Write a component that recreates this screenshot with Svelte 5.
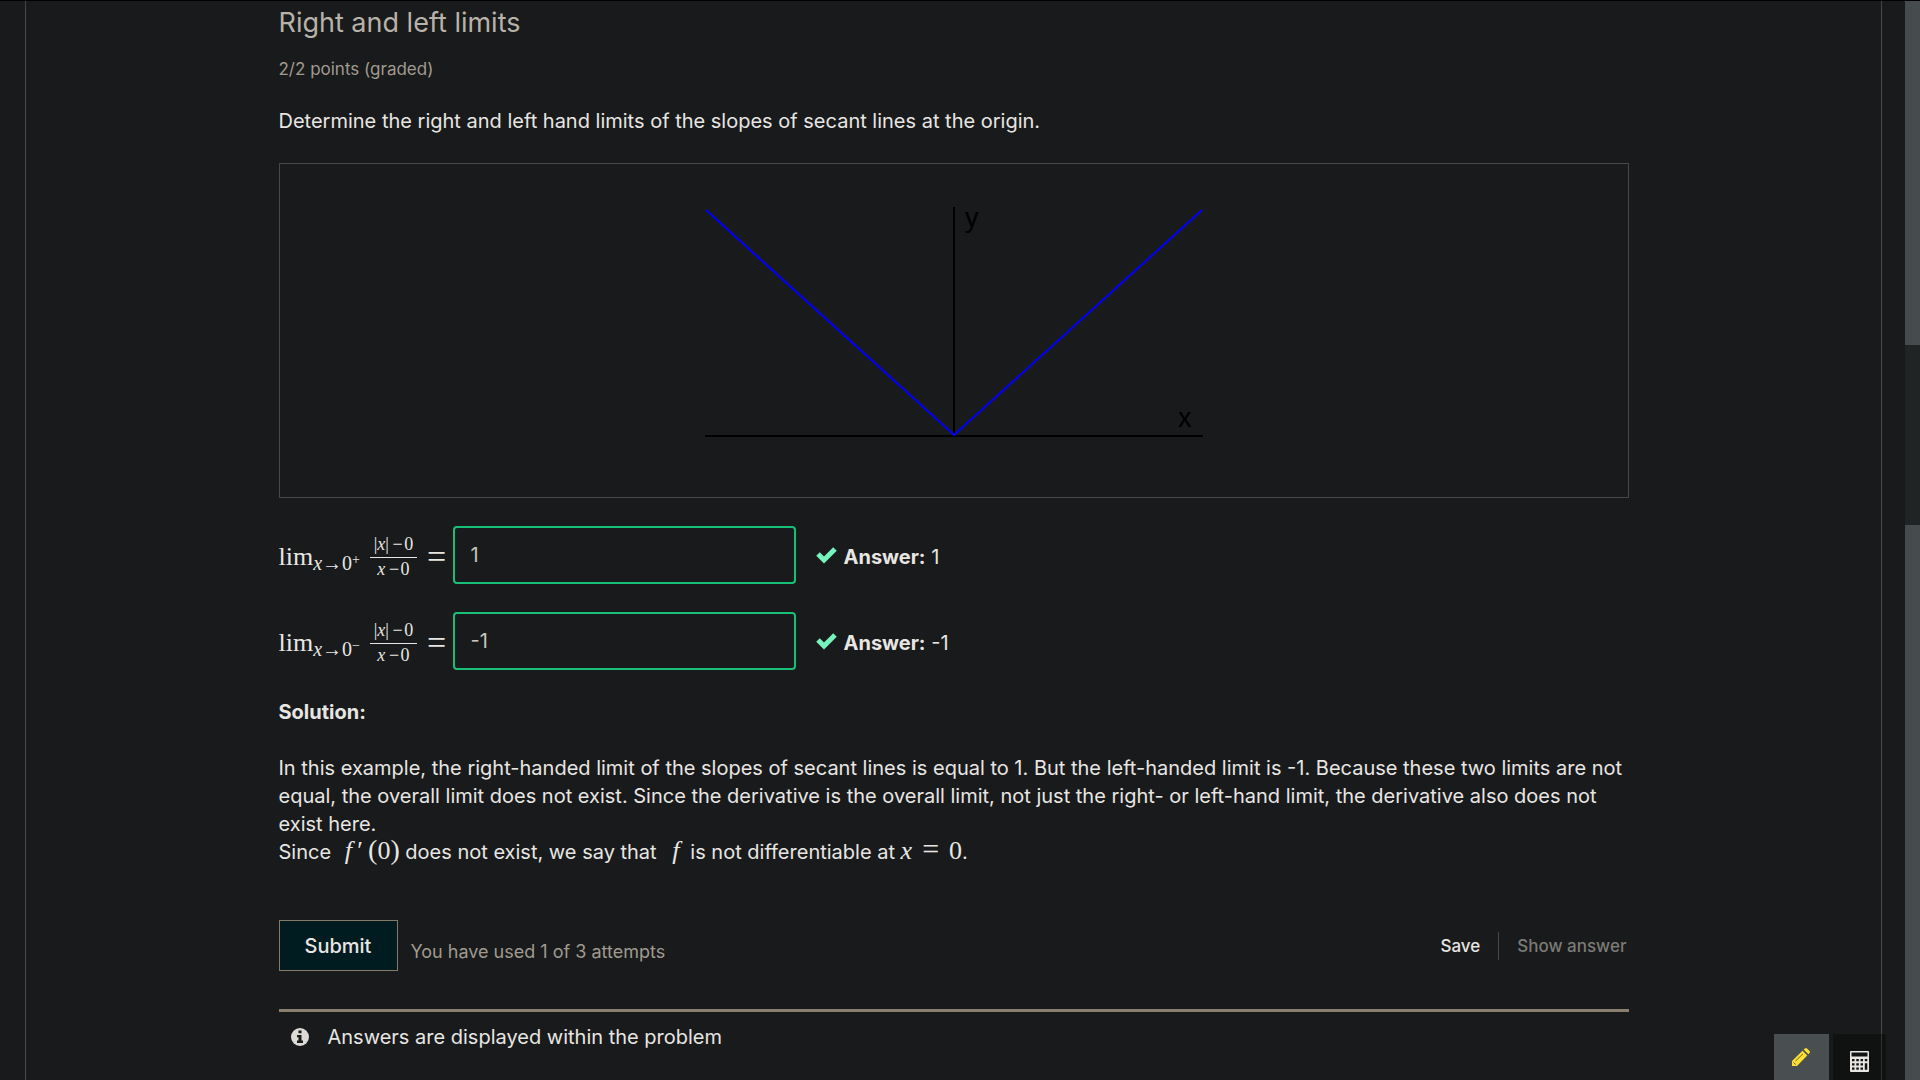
<script>
  const rows = [
    { id: 'right-limit', side: '+', label: 'Right-hand limit', value: '1' },
    { id: 'left-limit', side: '−', label: 'Left-hand limit', value: '-1' }
  ];
  let answers = $state(rows.map((row) => row.value));
</script>

<div class="page">
  <main class="course">
    <section class="problem">
      <h3>Right and left limits</h3>
      <p class="points">2/2 points (graded)</p>
      <p class="prompt">Determine the right and left hand limits of the slopes of secant lines at the origin.</p>

      <figure>
        <svg class="graph" viewBox="0 0 498 231" role="img" aria-label="Graph of the absolute value of x">
          <path class="axis" d="M249 0V229M0 229H498" />
          <path class="curve" d="M1 3L249 228L497 3" />
          <text x="260" y="20">y</text>
          <text x="473" y="220">x</text>
        </svg>
      </figure>

      {#each rows as row, i}
        <div class="answer-row">
          <label class="math" for={row.id} aria-label={row.label}>
            <span>lim</span><span class="under"><i>x</i>→0<span class="side">{row.side}</span></span>
            <span class="fraction">
              <span class="numerator">|<i>x</i>|&thinsp;−&hairsp;0</span>
              <span><i>x</i>&thinsp;−&hairsp;0</span>
            </span>
            <span class="equals">=</span>
          </label>
          <input id={row.id} type="text" bind:value={answers[i]} />
          <svg class="check" viewBox="0 0 21 16" aria-hidden="true">
            <path d="M2 7L8 13L19 2" />
          </svg>
          <span class="answer"><strong>Answer:</strong> {row.value}</span>
        </div>
      {/each}

      <h4>Solution:</h4>
      <p class="solution">
        In this example, the right-handed limit of the slopes of secant lines is equal to 1. But the left-handed limit is -1. Because these two limits are not equal, the overall limit does not exist. Since the derivative is the overall limit, not just the right- or left-hand limit, the derivative also does not exist here.<br />
        Since <span class="inline-math lead"><i>f</i>&thinsp;′&thinsp;<span class="paren">(</span>0<span class="paren">)</span></span> does not exist, we say that <span class="inline-math lead second"><i>f</i>&thinsp;</span> is not differentiable at <span class="inline-math"><i>x</i><span class="relation">=</span>0</span>.
      </p>

      <div class="actions">
        <button class="submit" type="button">Submit</button>
        <span class="attempts">You have used 1 of 3 attempts</span>
        <div class="secondary">
          <button type="button">Save</button>
          <button type="button" class="show" disabled>Show answer</button>
        </div>
      </div>

      <div class="notice">
        <svg viewBox="0 0 18 18" aria-hidden="true">
          <circle cx="9" cy="9" r="9" />
          <path d="M7.500 2.500h3v2.700h-3zM6 7h4.500v5.500H12V15H6v-2.500h1.500V9.300H6z" />
        </svg>
        <span>Answers are displayed within the problem</span>
      </div>
    </section>
  </main>

  <div class="tools">
    <button class="notes" type="button" aria-label="Toggle notes">
      <svg viewBox="0 0 18 18" aria-hidden="true">
        <path class="pencil" d="M0 18V13L10.500 2.700L15.300 7.500L5 18ZM11.600 1.600L13 .4Q14 -.4 15 .5L17.500 3Q18.400 4 17.500 5L16.400 6.300Z" />
        <path class="detail" d="M1.500 14.500L3.700 16.500M3.500 13L11 5.800" />
      </svg>
    </button>
    <button class="calculator" type="button" aria-label="Open calculator">
      <svg viewBox="0 0 19 21" aria-hidden="true">
        <rect class="case" x="0" y="0" width="19" height="21" rx="1" />
        <path class="key" d="M1.500 1.500h16v4h-16z" />
        <path class="key" d="M2 8h2.500v2.200H2zM6.300 8h2.500v2.200H6.300zM10.500 8H13v2.200h-2.500zM14.800 8h2.500v2.200h-2.500zM2 12.300h2.500v2.200H2zM6.300 12.300h2.500v2.200H6.300zM10.500 12.300H13v2.200h-2.500zM2 16.600h2.500v2.200H2zM6.300 16.600h2.500v2.200H6.300zM10.500 16.600H13v2.200h-2.500zM14.800 12.300h2.500v6.500h-2.500z" />
      </svg>
    </button>
  </div>

  <div class="scrollbar"><div class="thumb"></div></div>
</div>

<style>
  :global(body) {
    margin: 0;
    background: #181a1b;
  }
  .page {
    box-sizing: border-box;
    min-height: 100vh;
    display: flex;
    padding: 0 38px 0 25px;
    border-top: 1px solid #000;
    background: #181a1b;
    color: #e8e6e3;
    font: 20px/28px Inter, sans-serif;
  }
  .course {
    box-sizing: border-box;
    flex: 1;
    padding: 0 20px;
    border: solid #45484a;
    border-width: 0 1px;
  }
  .problem {
    max-width: 1350px;
    margin: 0 auto;
  }
  h3, h4, p, figure { margin: 0; }
  h3 {
    padding-top: 5px;
    font-size: 27px;
    line-height: 34px;
    font-weight: 400;
    color: #b8b2a8;
  }
  .points {
    margin-top: 15px;
    font-size: 17px;
    color: #a09a90;
  }
  .prompt { margin-top: 24px; }
  figure {
    margin-top: 28px;
    padding: 43px 20px 59px;
    border: 1px solid #45484a;
    display: flex;
    justify-content: center;
  }
  .graph {
    width: 498px;
    max-width: 100%;
    height: 231px;
    overflow: visible;
  }
  .graph path { fill: none; stroke-width: 2; }
  .graph .axis { stroke: #000; }
  .graph .curve { stroke: #00f; }
  .graph text {
    font: 27px "Liberation Sans", sans-serif;
    fill: #000;
  }
  .answer-row {
    display: flex;
    align-items: center;
    margin-top: 28px;
  }
  .math {
    display: flex;
    align-items: center;
    box-sizing: border-box;
    width: 174px;
    padding-top: 4px;
    font: 26px/32px "Liberation Serif", serif;
  }
  .under {
    padding-top: 12px;
    font-size: 20px;
    line-height: 20px;
    white-space: nowrap;
  }
  .side {
    font-size: 14px;
    vertical-align: 6px;
    line-height: 0;
  }
  .fraction {
    display: flex;
    flex-direction: column;
    margin-left: 10px;
    width: 47px;
    text-align: center;
    font-size: 18px;
    line-height: 22px;
    white-space: nowrap;
  }
  .numerator {
    padding-bottom: 3px;
    border-bottom: 1px solid #e8e6e3;
    line-height: 20px;
  }
  .equals {
    margin-left: 10px;
    font-size: 34px;
  }
  input {
    box-sizing: border-box;
    width: 343px;
    height: 58px;
    padding: 0 16px;
    border: 2px solid #16c077;
    border-radius: 4px;
    background: #181a1b;
    color: #c8c3bb;
    font: 20px/28px Inter, sans-serif;
  }
  .check {
    width: 21px;
    height: 16px;
    margin: 0 7px 0 20px;
    overflow: visible;
    fill: none;
    stroke: #78f2bd;
    stroke-width: 5;
  }
  .answer { padding-top: 4px; }
  h4 {
    margin-top: 28px;
    font-size: 20px;
    font-weight: 700;
  }
  strong { font-weight: 700; }
  .solution { margin-top: 28px; }
  .inline-math {
    font: 26px/20px "Liberation Serif", serif;
    white-space: nowrap;
  }
  .lead { padding-left: 8px; }
  .second { padding-left: 10px; }
  .paren { font-size: 28px; }
  .relation {
    padding: 0 10px;
    font-size: 30px;
    line-height: 20px;
  }
  .actions {
    display: flex;
    align-items: center;
    margin-top: 54px;
  }
  button {
    padding: 0;
    border: 0;
    background: none;
    color: #e8e6e3;
    font: 500 17px/28px Inter, sans-serif;
  }
  .submit {
    padding: 11px 26px 10px 25px;
    border: 1px solid #857b69;
    background: #001c20;
    font-size: 20px;
  }
  .attempts {
    padding: 12px 0 0 12px;
    font-size: 18px;
    color: #a09a90;
  }
  .secondary {
    display: flex;
    margin-left: auto;
  }
  .secondary .show {
    margin-left: 18px;
    padding: 0 2px 0 18px;
    border-left: 1px solid #45484a;
    color: #7c7a76;
  }
  .notice {
    display: flex;
    align-items: center;
    gap: 19px;
    margin-top: 38px;
    padding: 11px 12px 28px;
    border-top: 3px solid #8a7f6c;
  }
  .notice svg { width: 18px; height: 18px; fill: #dedbd7; }
  .notice path { fill: #181a1b; }
  .tools {
    position: fixed;
    right: 34px;
    bottom: 0;
    display: flex;
    gap: 4px;
  }
  .tools button {
    box-sizing: border-box;
    display: flex;
    justify-content: center;
    height: 46px;
    padding-right: 1px;
  }
  .tools .notes { width: 55px; background: #494e51; }
  .tools .calculator { width: 53px; background: rgba(0, 0, 0, 0.3); }
  .notes svg { width: 18px; height: 18px; margin-top: 14px; }
  .calculator svg { width: 19px; height: 21px; margin-top: 17px; }
  .pencil { fill: #fde030; }
  .detail { fill: none; stroke: #6b6430; stroke-width: 1; }
  .case { fill: #e8e6e3; }
  .key { fill: #121315; }
  .scrollbar {
    position: fixed;
    top: 1px;
    right: 0;
    bottom: 0;
    width: 15px;
    background: #464b4e;
  }
  .thumb {
    height: 180px;
    margin-top: 344px;
    background: #202425;
  }
</style>
